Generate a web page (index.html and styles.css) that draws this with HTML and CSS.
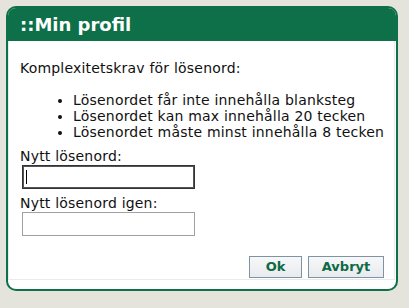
FILE: index.html
```html
<!DOCTYPE html>
<html lang="sv">
<head>
<meta charset="utf-8">
<title>Min profil</title>
<link rel="stylesheet" href="styles.css">
</head>
<body>
<div class="dialog">
  <div class="header">::Min profil</div>
  <div class="panel">
    <p class="intro">Komplexitetskrav för lösenord:</p>
    <ul class="rules">
      <li>Lösenordet får inte innehålla blanksteg</li>
      <li>Lösenordet kan max innehålla 20 tecken</li>
      <li>Lösenordet måste minst innehålla 8 tecken</li>
    </ul>
    <label class="label" for="pw1">Nytt lösenord:</label>
    <span class="field focused"><input id="pw1" class="input active" type="password"></span>
    <label class="label second" for="pw2">Nytt lösenord igen:</label>
    <span class="field"><input id="pw2" class="input" type="password"></span>
    <div class="actions">
      <button class="btn ok" type="button">Ok</button>
      <button class="btn cancel" type="button">Avbryt</button>
    </div>
  </div>
</div>
</body>
</html>
```
FILE: styles.css
```css
html, body {
  margin: 0;
  padding: 0;
  background: #e4e4dc;
}
body {
  font-family: "DejaVu Sans", Verdana, sans-serif;
  font-size: 14px;
  line-height: 16px;
  letter-spacing: 0.2px;
  color: #111;
}
.dialog {
  box-sizing: border-box;
  margin: 6px 0 0 6px;
  width: 392px;
  height: 285px;
  border: 2px solid #0d7049;
  border-radius: 10px;
  background: #fff;
  overflow: hidden;
  display: flex;
  flex-direction: column;
}
.header {
  height: 33px;
  flex: none;
  background: #0d7049;
  color: #fff;
  font-weight: bold;
  font-size: 18px;
  line-height: 34px;
  letter-spacing: 0;
  padding-left: 12px;
}
.panel {
  box-sizing: border-box;
  height: 239px;
  flex: none;
  border: 1px solid #ebebeb;
  border-top: none;
  margin-right: 1px;
  padding: 19px 10px 0 11px;
  display: flex;
  flex-direction: column;
  align-items: flex-start;
}
.intro {
  margin: 0;
}
.rules {
  margin: 16px 0 0 0;
  padding-left: 53px;
  list-style: disc;
  white-space: nowrap;
}
.label {
  display: block;
  margin-top: 8px;
}
.label.second {
  margin-top: 6px;
}
.field {
  position: relative;
  display: block;
  margin: 1px 0 0 2px;
}
.input {
  box-sizing: border-box;
  display: block;
  width: 173px;
  height: 24px;
  margin: 0;
  padding: 0 3px;
  border: 1px solid #a0a0a0;
  background: #fff;
  font-family: "DejaVu Sans", Verdana, sans-serif;
  font-size: 13px;
  outline: none;
}
.input.active {
  border-color: #333;
  box-shadow: inset 0 0 0 1px #555;
}
.focused::after {
  content: "";
  position: absolute;
  left: 4px;
  top: 5px;
  width: 1px;
  height: 14px;
  background: #000;
}
.actions {
  margin-top: auto;
  margin-bottom: 1px;
  align-self: flex-end;
  display: flex;
  gap: 6px;
}
.btn {
  box-sizing: border-box;
  height: 22px;
  margin: 0;
  padding: 0;
  border: 1px solid #8093a5;
  border-radius: 0;
  background: linear-gradient(#f6f7f8, #e8ebee);
  color: #0d6a44;
  font-family: "DejaVu Sans", Verdana, sans-serif;
  font-weight: bold;
  font-size: 13px;
  line-height: 20px;
  letter-spacing: 0;
}
.ok {
  width: 53px;
}
.cancel {
  width: 76px;
}
```
